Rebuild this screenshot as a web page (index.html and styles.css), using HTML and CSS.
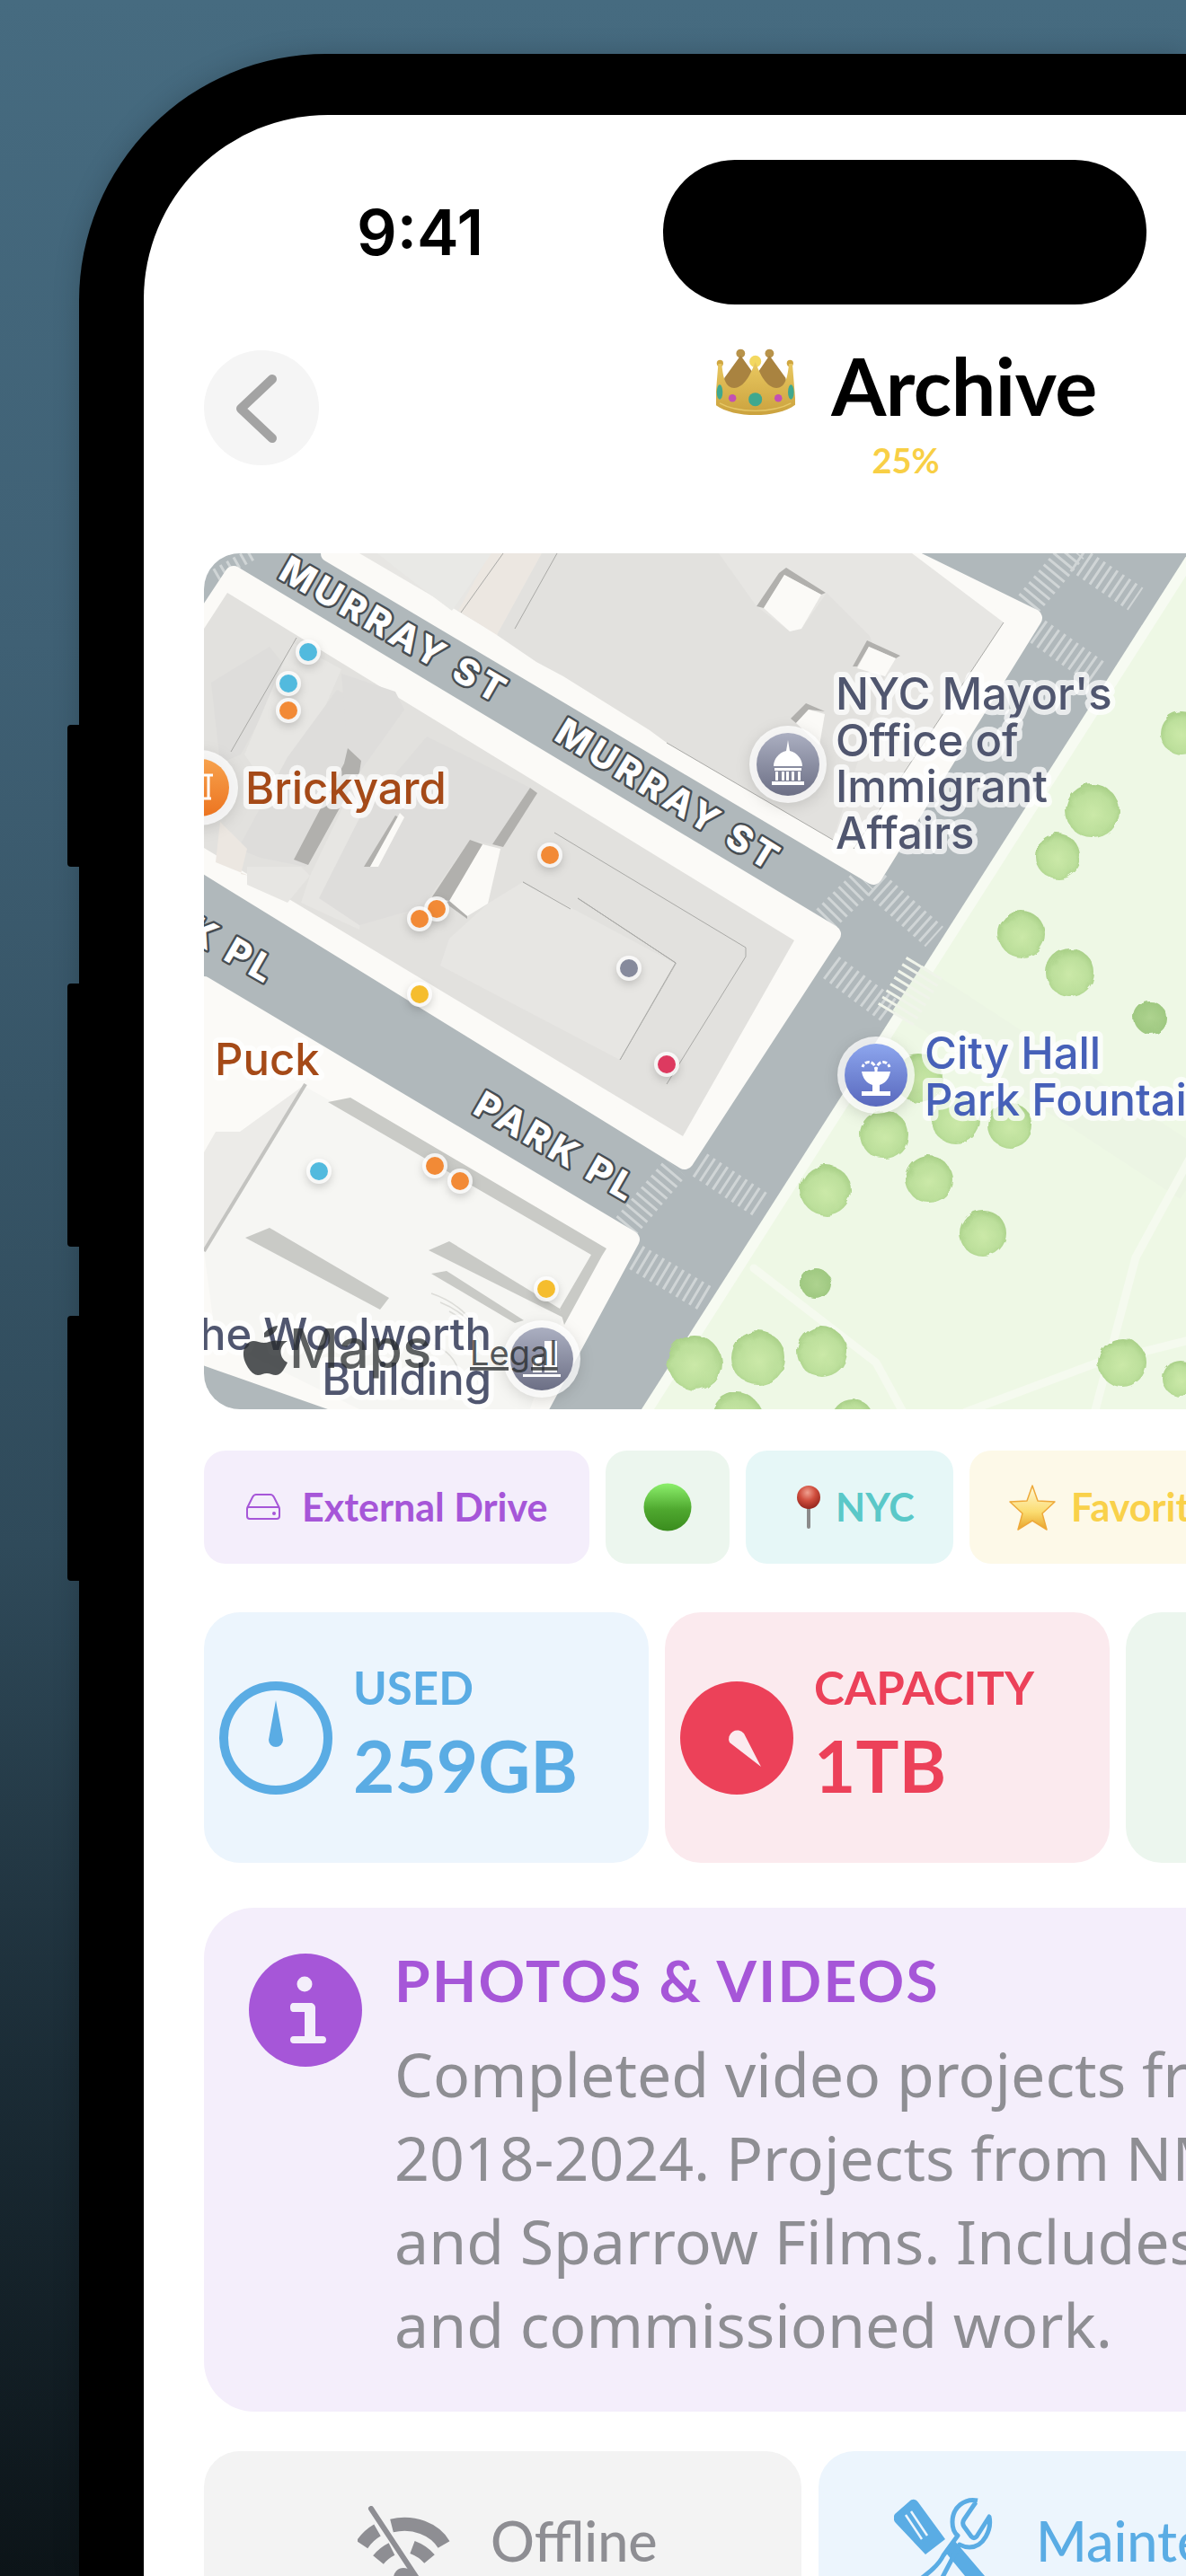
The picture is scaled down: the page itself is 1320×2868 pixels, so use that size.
FILE: index.html
```html
<!DOCTYPE html>
<html lang="en">
<head>
<meta charset="utf-8">
<title>Archive</title>
<link rel="stylesheet" href="styles.css">
</head>
<body>
<div class="phone">
  <i class="side-btn side-btn-a"></i>
  <i class="side-btn side-btn-b"></i>
  <i class="side-btn side-btn-c"></i>
  <main class="screen">
    <div class="status-bar">
      <span class="time">9:41</span>
      <div class="island"></div>
    </div>

    <header class="header">
      <button class="back" aria-label="Back">
        <svg viewBox="0 0 128 128" width="128" height="128"><path class="chev" d="M76 32 41 65l35 33"/></svg>
      </button>
      <div class="title-block">
        <div class="title-row">
          <svg class="crown" viewBox="50 28 268 232" width="88" height="76">
            <defs>
              <linearGradient id="gold" x1="0" y1="0" x2="0" y2="1"><stop offset="0" stop-color="#e9c860"/><stop offset="1" stop-color="#cba23e"/></linearGradient>
            </defs>
            <circle class="c-back" cx="133" cy="45" r="15"/>
            <circle class="c-back" cx="231" cy="45" r="15"/>
            <path class="c-back-d" d="M78 128 133 52l50 70 48-70 55 76 14 80H66z"/>
            <circle class="c-ball" cx="183" cy="72" r="20"/>
            <circle class="c-gold" cx="63" cy="78" r="11"/>
            <circle class="c-gold" cx="301" cy="78" r="11"/>
            <path class="c-body" d="M57 80h12c4 50 14 82 42 82 34 0 56-46 72-88 16 42 38 88 72 88 28 0 38-32 42-82h12l11 138c-60 48-216 48-274 0z"/>
            <path class="c-band" d="M62 214c60 34 180 34 242 0" />
            <ellipse class="c-green" cx="62" cy="176" rx="10" ry="25"/>
            <ellipse class="c-green" cx="304" cy="176" rx="10" ry="25"/>
            <circle class="c-green" cx="183" cy="201" r="23"/>
            <circle class="c-pink" cx="105" cy="197" r="13"/>
            <circle class="c-pink" cx="261" cy="197" r="13"/>
          </svg>
          <h1 class="title">Archive</h1>
        </div>
        <div class="percent">25%</div>
      </div>
    </header>

    <section class="map">
      <svg class="map-svg" viewBox="227 616 1294 953" width="1294" height="953">
        <defs>
          <radialGradient id="tree" cx=".5" cy=".55" r=".55"><stop offset="0" stop-color="#cbe9a8"/><stop offset=".7" stop-color="#bcdf9b"/><stop offset="1" stop-color="#a8cf87"/></radialGradient>
          <radialGradient id="treeD" cx=".5" cy=".5" r=".55"><stop offset="0" stop-color="#aed38f"/><stop offset="1" stop-color="#9dc77f"/></radialGradient>
          <linearGradient id="pinOrange" x1="0" y1="0" x2="0" y2="1"><stop offset="0" stop-color="#f7a24d"/><stop offset="1" stop-color="#ec7420"/></linearGradient>
          <linearGradient id="pinGray" x1="0" y1="0" x2="0" y2="1"><stop offset="0" stop-color="#abafc1"/><stop offset="1" stop-color="#6c6f85"/></linearGradient>
          <linearGradient id="pinBlue" x1="0" y1="0" x2="0" y2="1"><stop offset="0" stop-color="#8da6ee"/><stop offset="1" stop-color="#5868bd"/></linearGradient>
          <filter id="blob" x="-10%" y="-10%" width="120%" height="120%"><feTurbulence type="fractalNoise" baseFrequency=".07" numOctaves="2" seed="4"/><feDisplacementMap in="SourceGraphic" scale="7"/></filter>
        </defs>

        <rect class="road" x="227" y="616" width="1294" height="953"/>

        <!-- park -->
        <polygon class="park-edge" points="1322,616 1521,616 1521,1569 714,1569"/>
        <polygon class="park" points="1336,616 1521,616 1521,1569 728,1569"/>
        <path class="plaza" d="M1010 1100 1330 1310"/>
        <path class="park-path" d="M839 1412 975 1517l30 55M1075 1572l147-55 42-10 60-15M1219 1570l45-170 60-110"/>

        <!-- crosswalks -->
        <g class="stripes">
          <path d="M1145 672l50-60"/><path d="M1155 703l67 47"/><path d="M1199 623l65 44"/>
          <path d="M919 1023l43-43"/><path d="M975 985l65 58"/><path d="M925 1077l67 50"/>
          <path d="M779 1297l70 46"/><path d="M708 1400l79 47"/><path d="M697 1365l55-65"/>
          <path class="stripes-faint" d="M240 640l42-24"/>
          <path class="stripes-park" d="M1029 1077l-34 56"/>
        </g>

        <!-- sidewalks -->
        <polygon class="walk" points="367,616 972,975 1150,688 1003,616"/>
        <polygon class="walk" points="260,640 926,1040 762,1292 227,962 227,690"/>
        <polygon class="walk" points="227,1097 702,1380 600,1569 395,1569 227,1510"/>

        <!-- top block buildings -->
        <polygon class="bldg-l" points="400,616 952,940 1117,693 1015,616"/>
        <polygon class="bldg-t" points="510,680 553,707 603,616 545,616"/>
        <polygon class="bldg-m" points="467,653 503,680 547,616 420,616"/>
        <polygon class="bldg" points="603,616 553,707 597,737 627,753 723,813 742,827 927,935 985,753 968,708 920,660 892,700 879,703 842,675 800,616"/>
        <polygon class="shade" points="842,675 867,638 875,632 919,660 914,662 873,640 850,677"/>
        <polygon class="walk-in" points="850,677 873,640 914,662 892,700 879,703"/>
        <polygon class="shade" points="949,742 965,713 1002,730 997,733 967,720 954,742"/>
        <polygon class="walk-in" points="954,744 967,720 997,733 985,753"/>
        <polygon class="shade" points="880,800 897,783 918,792 900,790 886,805"/>
        <polygon class="walk-in" points="886,805 900,790 918,795 912,830"/>
        <path class="hair" d="M742 827 927 935M560 616l-47 66M620 616l-47 84M1117 693 950 945"/>

        <!-- block two buildings -->
        <polygon class="bldg" points="227,944 760,1265 884,1047 253,660 227,700"/>
        <polygon class="bldg-d" points="235,760 300,720 320,745 268,840 245,850"/>
        <polygon class="bldg-l" points="272,840 325,715 380,745 330,860 300,880"/>
        <polygon class="bldg-d" points="320,843 375,768 440,800 385,860 400,860 340,965 290,955 265,945"/>
        <polygon class="bldg-d" points="380,750 440,770 450,790 400,860 385,815"/>
        <polygon class="bldg-t" points="240,960 277,975 268,973 275,945 245,915"/>
        <polygon class="bldg-l" points="275,965 335,965 345,975 320,1005 275,985"/>
        <polygon class="bldg-l" points="345,975 400,860 450,890 405,975 400,1035 335,1005"/>
        <polygon class="bldg-d" points="475,820 590,877 548,940 523,935 470,1010 400,1030 355,1000 403,905"/>
        <polygon class="walk-in" points="537,940 500,1003 520,1020 543,1006 557,945"/>
        <polygon class="shade" points="523,935 480,1000 500,1003 537,940"/>
        <polygon class="shade" points="387,833 402,847 400,860 343,963 327,957 383,850"/>
        <polygon class="shade" points="590,877 598,883 560,943 548,940"/>
        <polygon class="shade" points="440,908 405,965 412,965 444,910"/>
        <polygon class="walk-in" points="445,905 412,965 421,965 450,910"/>
        <polygon class="shade" points="500,1003 520,1020 520,1023 495,1005"/>
        <path class="hair" d="M257 837 330 710M617 927 830 1055v10l-88 142M582 982l53 30M643 1000l109 72 0 1-62 107"/>
        <polygon class="bldg-l" points="500,1045 543,1006 582,982 752,1073 690,1180 490,1075"/>
        <path class="hair" d="M582 982l53 30M643 1000 752 1072l-62 108"/>

        <!-- block three -->
        <polygon class="inner" points="340,1210 670,1395 620,1480 590,1569 400,1569 240,1490 227,1393"/>
        <polygon class="bar" points="365,1227 390,1222 675,1390 670,1398 628,1475 623,1457 658,1397"/>
        <polygon class="bar" points="273,1378 300,1367 433,1445 423,1458"/>
        <polygon class="bar" points="477,1392 500,1382 623,1457 627,1467"/>
        <polygon class="bar" points="480,1418 497,1415 583,1470 573,1473"/>
        <polygon class="bldg-soft" points="227,1283 240,1260 267,1260 340,1207 227,1393"/>
        <path class="shade-line" d="M340 1207 227 1393"/>
        <path class="fine" d="M480 1440c30 10 50 30 60 60M490 1450c25 10 40 25 48 50M500 1460c15 8 30 20 35 40M475 1495c20 5 30 15 35 30"/>

        <!-- trees -->
        <g class="trees">
          <circle cx="1216" cy="903" r="30"/><circle cx="1177" cy="953" r="25"/><circle cx="1137" cy="1040" r="26"/><circle cx="1191" cy="1083" r="27"/>
          <circle cx="1315" cy="816" r="24"/><circle cx="984" cy="1263" r="27"/><circle cx="1064" cy="1247" r="27"/><circle cx="1124" cy="1253" r="25"/>
          <circle cx="1022" cy="1200" r="27"/><circle cx="919" cy="1325" r="28"/><circle cx="1034" cy="1313" r="26"/><circle cx="1094" cy="1373" r="26"/>
          <circle cx="773" cy="1517" r="30"/><circle cx="844" cy="1512" r="30"/><circle cx="915" cy="1505" r="28"/><circle cx="820" cy="1578" r="28"/>
          <circle cx="1249" cy="1517" r="27"/><circle cx="1314" cy="1535" r="20"/><circle cx="949" cy="1582" r="24"/>
        </g>
        <g class="trees-d">
          <circle cx="908" cy="1429" r="17"/><circle cx="1280" cy="1133" r="18"/>
        </g>

        <!-- markers -->
        <g class="dot dot-blue" transform="translate(343,726)"><circle class="halo" r="14"/><circle class="core" r="10"/></g>
        <g class="dot dot-blue" transform="translate(321,761)"><circle class="halo" r="14"/><circle class="core" r="10"/></g>
        <g class="dot dot-orange" transform="translate(321,791)"><circle class="halo" r="14"/><circle class="core" r="10"/></g>
        <g class="dot dot-orange" transform="translate(612,952)"><circle class="halo" r="14"/><circle class="core" r="10"/></g>
        <g class="dot dot-orange" transform="translate(486,1012)"><circle class="halo" r="14"/><circle class="core" r="10"/></g>
        <g class="dot dot-orange" transform="translate(467,1023)"><circle class="halo" r="14"/><circle class="core" r="10"/></g>
        <g class="dot dot-yellow" transform="translate(467,1107)"><circle class="halo" r="14"/><circle class="core" r="10"/></g>
        <g class="dot dot-gray" transform="translate(700,1078)"><circle class="halo" r="14"/><circle class="core" r="10"/></g>
        <g class="dot dot-red" transform="translate(742,1185)"><circle class="halo" r="14"/><circle class="core" r="10"/></g>
        <g class="dot dot-blue" transform="translate(355,1304)"><circle class="halo" r="14"/><circle class="core" r="10"/></g>
        <g class="dot dot-orange" transform="translate(484,1298)"><circle class="halo" r="14"/><circle class="core" r="10"/></g>
        <g class="dot dot-orange" transform="translate(512,1315)"><circle class="halo" r="14"/><circle class="core" r="10"/></g>
        <g class="dot dot-yellow" transform="translate(608,1435)"><circle class="halo" r="14"/><circle class="core" r="10"/></g>

        <!-- street names -->
        <text class="street" transform="translate(308,643) rotate(30)">MURRAY ST</text>
        <text class="street" transform="translate(615,823) rotate(31.5)">MURRAY ST</text>
        <text class="street street-end" transform="translate(298,1097) rotate(30)">PARK PL</text>
        <text class="street street-end" transform="translate(700,1340) rotate(30)">PARK PL</text>

        <!-- pins -->
        <g class="pin" transform="translate(223,877)">
          <circle class="pin-halo" r="42"/><circle class="fill-orange" r="32"/>
          <path class="pin-ico" d="M-14-14h28M-12 12h24M-9-14v26M0-14v26M9-14v26"/>
        </g>
        <g class="pin" transform="translate(877,851)">
          <circle class="pin-halo" r="43"/><circle class="fill-gray" r="35"/>
          <path class="pin-solid" d="M0-27l2 12c9 2 14 10 14 17h-32c0-7 5-15 14-17zM-15 4h30v3h-30zM-18 19h36v4h-36zM-14 8h3v10h-3zM-7 8h3v10h-3zM4 8h3v10h-3zM11 8h3v10h-3zM-2 8h3v10h-3z"/>
        </g>
        <g class="pin" transform="translate(975,1197)">
          <circle class="pin-halo" r="43"/><circle class="fill-blue" r="35"/>
          <path class="pin-solid" d="M-16-4H16C14 8 6 10 4 11V18H16V23H-16V18H-4V11C-6 10-14 8-16-4z"/>
          <path class="pin-jet" d="M0-4C0-16-12-18-15-9M0-4C0-16 12-18 15-9"/>
        </g>
        <g class="pin" transform="translate(603,1513)">
          <circle class="pin-halo" r="43"/><circle class="fill-gray" r="35"/>
          <path class="pin-solid" d="M-21 17h42v3h-42zM-10-2h10v17h-10zM3-20h14v35h-14z"/>
        </g>

        <!-- labels -->
        <text class="label label-brick" x="273" y="895">Brickyard</text>
        <text class="label label-brick" x="239" y="1197">Puck</text>
        <text class="label label-slate" x="930" y="790">NYC Mayor's</text>
        <text class="label label-slate" x="930" y="842">Office of</text>
        <text class="label label-slate" x="930" y="893">Immigrant</text>
        <text class="label label-slate" x="930" y="945">Affairs</text>
        <text class="label label-blue" x="1029" y="1190">City Hall</text>
        <text class="label label-blue" x="1029" y="1242">Park Fountain</text>
        <text class="label label-slate label-end" x="547" y="1503">The Woolworth</text>
        <text class="label label-slate label-end" x="547" y="1553">Building</text>

        <!-- attribution -->
        <path class="apple" d="M294 1484c4-4 10-8 15-8-1 6-6 12-15 13zM310 1493c-6-2-11 2-16 2-6 0-11-4-16-1-8 4-9 16-4 25 3 6 8 12 13 12 4 0 6-2 10-2s6 2 10 2c6 0 10-8 13-14-9-4-11-18 0-24z"/>
        <text class="attr-maps" x="322" y="1523">Maps</text>
        <text class="attr-legal" x="523" y="1520">Legal</text>
      </svg>
    </section>

    <div class="chips">
      <div class="chip chip-purple">
        <svg class="chip-drive" viewBox="0 0 40 30" width="40" height="30"><path class="drive" d="M2 16 8 4c1-2 2-3 4-3h16c2 0 3 1 4 3l6 12M4 15h32c1.500 0 2 1 2 2v8c0 2-1 3-3 3H5c-2 0-3-1-3-3v-8c0-1 .500-2 2-2z"/><circle class="drive-dot" cx="32" cy="22" r="2"/></svg>
        <span>External Drive</span>
      </div>
      <div class="chip chip-green">
        <svg viewBox="0 0 54 54" width="54" height="54"><defs><linearGradient id="greenBall" x1="0" y1="0" x2="0" y2="1"><stop offset="0" stop-color="#8cf06c"/><stop offset=".55" stop-color="#4fa82f"/><stop offset="1" stop-color="#3a8c1e"/></linearGradient></defs><circle cx="27" cy="27" r="26.500" fill="url(#greenBall)"/></svg>
      </div>
      <div class="chip chip-teal">
        <svg viewBox="0 0 28 50" width="28" height="50"><defs><radialGradient id="pinHead" cx=".45" cy=".3" r=".7"><stop offset="0" stop-color="#f0a090"/><stop offset=".5" stop-color="#cf4d3d"/><stop offset="1" stop-color="#95261e"/></radialGradient></defs><rect x="12" y="22" width="4" height="27" rx="2" fill="#8b8b8b"/><circle cx="14" cy="14" r="13" fill="url(#pinHead)"/></svg>
        <span>NYC</span>
      </div>
      <div class="chip chip-yellow">
        <svg viewBox="0 0 54 52" width="54" height="52"><defs><linearGradient id="starFill" x1="0" y1="0" x2="0" y2="1"><stop offset="0" stop-color="#fff8d8"/><stop offset=".6" stop-color="#fbdc70"/><stop offset="1" stop-color="#e7a42a"/></linearGradient></defs><path fill="url(#starFill)" stroke="#eea93a" stroke-width="1.500" stroke-linejoin="round" d="M27 2l6 17 19 1-14 13 5 18-16-10-16 10 5-18L2 20l19-1z"/></svg>
        <span>Favorites</span>
      </div>
    </div>

    <div class="stats">
      <div class="stat stat-blue">
        <svg class="stat-ico" viewBox="0 0 126 126" width="126" height="126"><circle class="dial" cx="63" cy="63" r="58"/><path class="needle" d="M63 21l8 44a8 8 0 0 1-16 0z"/></svg>
        <div class="stat-text"><div class="stat-label">USED</div><div class="stat-value">259GB</div></div>
      </div>
      <div class="stat stat-red">
        <svg class="stat-ico" viewBox="0 0 126 126" width="126" height="126"><circle class="dial-fill" cx="63" cy="63" r="63"/><path class="needle-w" d="M90 95 55 68a9.500 9.500 0 0 1 16-10z"/></svg>
        <div class="stat-text"><div class="stat-label">CAPACITY</div><div class="stat-value">1TB</div></div>
      </div>
      <div class="stat stat-green"></div>
    </div>

    <section class="info">
      <svg class="info-ico" viewBox="0 0 126 126" width="126" height="126"><circle class="info-disc" cx="63" cy="63" r="63"/><ellipse class="info-i" cx="62" cy="34" rx="8.500" ry="8.500"/><path class="info-i" d="M50 55h19c2 0 5 2 5 5v32h8c3 0 4 2 4 4s-1 4-4 4H50c-3 0-4-2-4-4s1-4 4-4h12V65H50c-3 0-4-2-4-5s1-5 4-5z"/></svg>
      <div class="info-body">
        <h2 class="info-title">PHOTOS &amp; VIDEOS</h2>
        <p class="info-text">Completed video projects from<br>2018-2024. Projects from NMG<br>and Sparrow Films. Includes personal<br>and commissioned work.</p>
      </div>
    </section>

    <div class="badges">
      <div class="badge badge-gray">
        <svg viewBox="398 2790 104 78" width="104" height="78"><path class="wifi" d="M436 2812c24-6 48 4 58 21M403 2833c4-6 10-12 17-16M421 2850c4-5 9-9 15-12M459 2836c8 3 14 7 19 13"/><circle class="wifi-dot" cx="449" cy="2870" r="11"/><path class="wifi-slash" d="M413 2793l62 94"/></svg>
        <span>Offline</span>
      </div>
      <div class="badge badge-blue">
        <svg viewBox="995 2780 110 88" width="110" height="88"><path class="tool-blade" d="M1012 2785c3-3 7-3 10 1l30 41-22 17-33-35c-3-3-3-7-1-10zM1051 2840l10-13 35 41h-22z"/><path class="tool-slot" d="M1008 2800l18 27M1014 2796l18 27"/><path class="tool-wrench" d="M1088 2784c-14-3-28 7-28 24 0 7 2 12 6 15l-16 22c-6 12-17 20-29 29-5 4-8 8-9 14M1086 2786l-13 19c-2 3-2 5 0 8l8 11c2 2 4 2 6 0l14-22c3 14-6 34-22 34-6 0-9-2-11-3l-22 42"/></svg>
        <span>Maintenance</span>
      </div>
    </div>
  </main>
</div>
</body>
</html>
```
FILE: styles.css
```css
* { box-sizing: border-box; }
html, body { margin: 0; width: 1320px; height: 2868px; overflow: hidden; }
body {
  background: linear-gradient(180deg, #466b80 0%, #3f6074 25%, #2f4a5a 60%, #1b2c36 80%, #0c1418 100%);
  font-family: "Lato", "Liberation Sans", sans-serif;
}

.phone {
  position: relative;
  margin: 60px 0 0 88px;
  width: 1232px;
  height: 2808px;
  padding: 68px 0 0 72px;
  background: #000;
  border-radius: 275px 0 0 0;
  box-shadow: 0 0 30px rgba(0,0,0,.18);
}
.side-btn { position: absolute; left: -13px; width: 16px; background: #000; border-radius: 4px 0 0 4px; }
.side-btn-a { top: 747px; height: 158px; }
.side-btn-b { top: 1035px; height: 293px; }
.side-btn-c { top: 1405px; height: 295px; }

.screen {
  width: 1160px;
  height: 2740px;
  padding: 50px 0 0 67px;
  background: #fff;
  border-radius: 205px 0 0 0;
  overflow: hidden;
}

.status-bar { display: flex; align-items: center; height: 161px; padding-left: 170px; }
.time {
  width: 341px;
  font: 600 70px/1 "Inter", "Liberation Sans", sans-serif;
  color: #000;
}
.island { flex: none; width: 538px; height: 161px; background: #000; border-radius: 80px; }

.header { display: flex; margin-top: 51px; height: 129px; }
.back { width: 128px; height: 128px; padding: 0; border: 0; border-radius: 50%; background: #f5f5f5; flex: none; }
.back svg { display: block; }
.chev { fill: none; stroke: #a3a3a3; stroke-width: 10; stroke-linecap: round; stroke-linejoin: round; }

.title-block { margin: -5px 0 0 443px; display: flex; flex-direction: column; align-items: center; width: 420px; }
.title-row { display: flex; align-items: center; gap: 40px; height: 88px; padding-left: 2px; }
.title { margin: 0; font: 700 88px/88px "Lato", sans-serif; color: #000; letter-spacing: -.5px; }
.percent { margin-top: 21px; font: 700 38px/36px "Lato", sans-serif; color: #f8cf45; }
.crown { flex: none; margin-top: -6px; }
.c-back { fill: #b8934a; }
.c-back-d { fill: #a98340; }
.c-ball { fill: #f3d860; }
.c-gold { fill: #cfa640; }
.c-body { fill: url(#gold); }
.c-band { fill: none; stroke: #e6c868; stroke-width: 4; }
.c-green { fill: #3fa88f; }
.c-pink { fill: #c350b4; }

.map { flex: none; margin-top: 97px; width: 1294px; height: 953px; border-radius: 40px; overflow: hidden; }
.map-svg { display: block; }
.road { fill: #b0b8bb; }
.park-edge { fill: #f7fbf2; }
.park { fill: #eef8e5; }
.plaza { fill: none; stroke: #ecf5e4; stroke-width: 60; }
.park-path { fill: none; stroke: #f5faef; stroke-width: 9; stroke-linecap: round; stroke-linejoin: round; }
.stripes path { fill: none; stroke: #d0d5d6; stroke-width: 30; stroke-dasharray: 3 5.500; }
.stripes .stripes-faint { stroke-width: 14; }
.stripes .stripes-park { stroke: #f0f4ea; stroke-width: 46; }
.walk { fill: #fbfaf7; stroke: #fbfaf7; stroke-width: 20; stroke-linejoin: round; }
.bldg { fill: #e2e1de; }
.bldg-l { fill: #e7e6e3; }
.bldg-m { fill: #e9e9e6; }
.bldg-d { fill: #dedddb; }
.bldg-t { fill: #ece7e1; }
.bldg-soft { fill: #ecebe8; }
.walk-in { fill: #fbfaf7; }
.shade { fill: #b1b0ad; }
.shade-line { fill: none; stroke: #c3c3c0; stroke-width: 4; }
.hair { fill: none; stroke: #a9a9a6; stroke-width: 1; }
.inner { fill: #f6f6f3; }
.bar { fill: #c9cac6; }
.fine { fill: none; stroke: #dcdcd8; stroke-width: 1.500; }

.trees { fill: url(#tree); filter: url(#blob); }
.trees-d { fill: url(#treeD); filter: url(#blob); }

.dot { filter: drop-shadow(0 4px 5px rgba(0,0,0,.18)); }
.halo { fill: rgba(255,255,255,.8); }
.dot-blue .core { fill: #52bade; }
.dot-orange .core { fill: #f28a36; }
.dot-yellow .core { fill: #f5bd2e; }
.dot-gray .core { fill: #868a9c; }
.dot-red .core { fill: #dd3a60; }

.street {
  font: 800 41px "Inter", "Liberation Sans", sans-serif;
  letter-spacing: 4.500px;
  fill: #fff;
  stroke: #474d52;
  stroke-width: 5px;
  stroke-linejoin: round;
  paint-order: stroke;
}
.street-end { text-anchor: end; }

.pin { filter: drop-shadow(0 4px 8px rgba(0,0,0,.15)); }
.pin-halo { fill: rgba(255,255,255,.75); }
.fill-orange { fill: url(#pinOrange); }
.fill-gray { fill: url(#pinGray); }
.fill-blue { fill: url(#pinBlue); }
.pin-ico { fill: none; stroke: #fff; stroke-width: 3; }
.pin-solid { fill: #fff; }
.pin-jet { fill: none; stroke: #fff; stroke-width: 3; stroke-dasharray: 5 2; }

.label {
  font: 500 49px "Inter", "Liberation Sans", sans-serif;
  stroke: rgba(255,255,255,.72);
  stroke-width: 12px;
  stroke-linejoin: round;
  paint-order: stroke;
}
.label-brick { fill: #a54a18; }
.label-slate { fill: #50566f; }
.label-blue { fill: #4660b8; }
.label-end { text-anchor: end; }
.apple { fill: rgba(40,44,46,.8); }
.attr-maps { font: 500 60px "Inter", "Liberation Sans", sans-serif; fill: rgba(40,44,46,.75); }
.attr-legal { font: 400 38px "Inter", "Liberation Sans", sans-serif; fill: rgba(40,44,46,.8); text-decoration: underline; }

.chips { display: flex; gap: 18px; margin-top: 46px; height: 126px; }
.chip {
  display: flex;
  align-items: center;
  flex: none;
  height: 126px;
  border-radius: 24px;
  font: 700 43px/1 "Lato", sans-serif;
}
.chip span { margin-top: -2px; }
.chip svg { flex: none; }
.chip-purple { width: 429px; padding-left: 46px; gap: 23px; background: #f4eefb; color: #a656d8; }
.chip-green { width: 138px; justify-content: center; background: #ecf6ee; }
.chip-teal { width: 231px; padding-left: 56px; gap: 16px; background: #e6f7f7; color: #5ac8c8; }
.chip-yellow { width: 360px; padding-left: 43px; gap: 16px; background: #fdf9e8; color: #f9d14a; }
.drive { fill: none; stroke: #a656d8; stroke-width: 2; }
.drive-dot { fill: #a656d8; }

.stats { display: flex; gap: 18px; margin-top: 54px; }
.stat { display: flex; align-items: center; gap: 23px; flex: none; width: 495px; height: 279px; padding-left: 17px; border-radius: 40px; }
.stat-ico { flex: none; }
.stat-blue { background: #ecf5fd; color: #5aace4; }
.stat-red { background: #fbeaee; color: #ec4159; }
.stat-green { background: #ecf6ee; }
.stat-text { display: flex; flex-direction: column; margin-bottom: 14px; }
.stat-label { font: 700 51px/60px "Lato", sans-serif; letter-spacing: 0; }
.stat-value { margin-top: 14px; font: 700 80px/84px "Lato", sans-serif; }
.dial { fill: none; stroke: #5aace4; stroke-width: 10; }
.needle { fill: #5aace4; }
.dial-fill { fill: #ec4159; }
.needle-w { fill: #fbeaee; }

.info { display: flex; gap: 38px; margin-top: 50px; width: 1294px; height: 561px; padding: 51px 0 0 50px; border-radius: 56px; background: #f4eefb; }
.info-ico { flex: none; }
.info-disc { fill: #a656d8; }
.info-i { fill: #f4eefb; }
.info-body { flex: 1; min-width: 0; }
.info-title { margin: -2px 0 0 -2px; font: 700 64px/64px "Lato", sans-serif; letter-spacing: 2.300px; color: #a656d8; white-space: nowrap; }
.info-text { margin: 25px 0 0 -2px; font: 400 68px/93px "Noto Sans", "Open Sans", sans-serif; color: #8e8e93; white-space: nowrap; }

.badges { display: grid; grid-template-columns: 665px 610px; gap: 19px; margin-top: 44px; }
.badge { display: flex; align-items: flex-start; height: 200px; border-radius: 40px; font: 500 61px/1 "Lato", sans-serif; }
.badge svg { flex: none; }
.badge-gray { padding: 61px 0 0 171px; gap: 44px; background: #f3f3f3; color: #8e8e93; }
.badge-gray span { margin-top: 8px; }
.badge-blue { padding: 51px 0 0 84px; gap: 48px; background: #ecf5fd; color: #5aace4; }
.badge-blue span { margin-top: 18px; }
.wifi { fill: none; stroke: #8e8e93; stroke-width: 15; }
.wifi-dot { fill: #8e8e93; }
.wifi-slash { fill: none; stroke: #8e8e93; stroke-width: 6; stroke-linecap: round; }
.tool-blade { fill: #5aace4; }
.tool-slot { fill: none; stroke: #ecf5fd; stroke-width: 2.500; }
.tool-wrench { fill: none; stroke: #5aace4; stroke-width: 5; stroke-linejoin: round; }
```
